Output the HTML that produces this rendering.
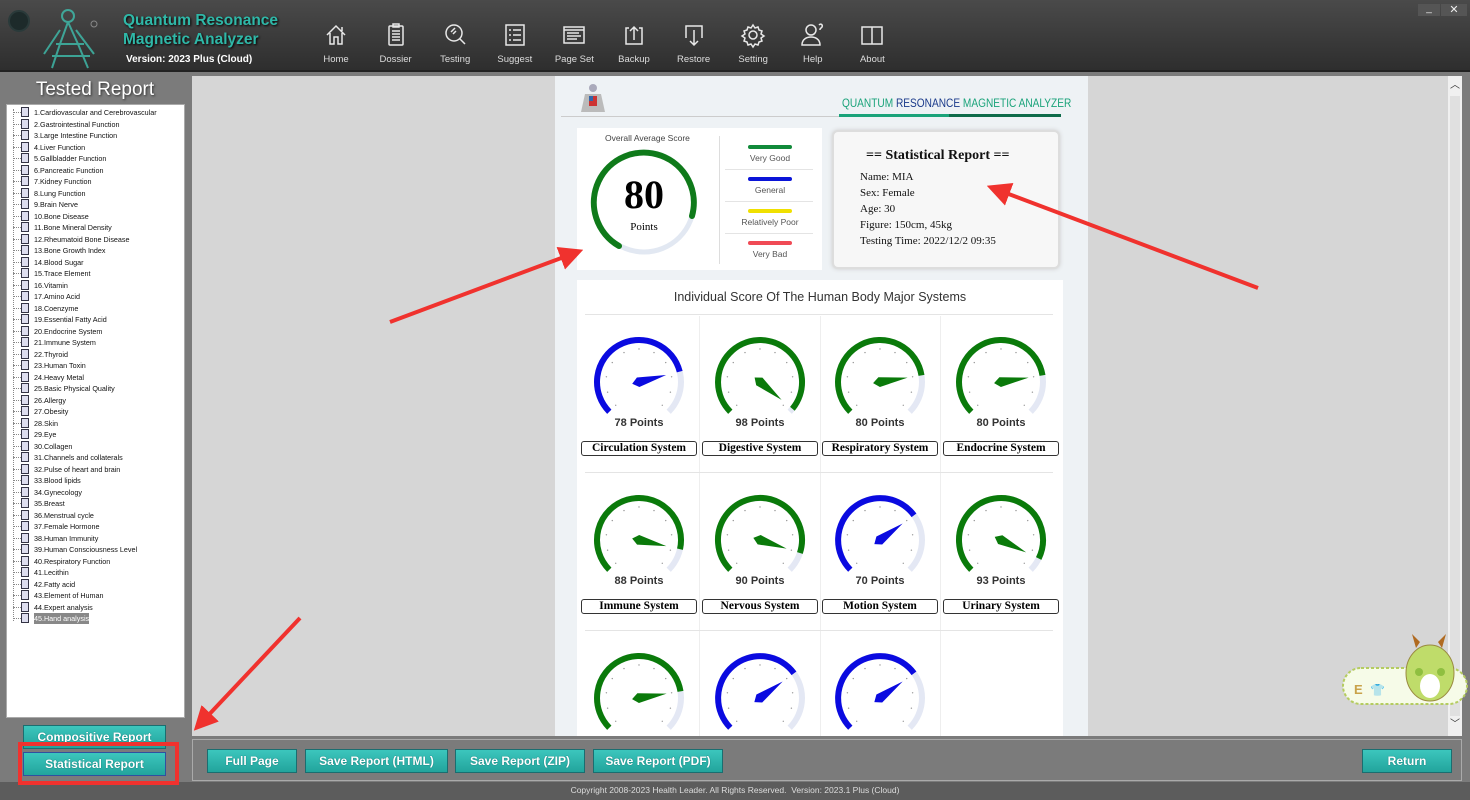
<!DOCTYPE html>
<html><head><meta charset="utf-8"><style>
*{box-sizing:border-box;margin:0;padding:0}
body{width:1470px;height:800px;overflow:hidden;background:#7b7b7b;font-family:"Liberation Sans",sans-serif;position:relative}
.abs{position:absolute}
#hdr{left:0;top:0;width:1470px;height:72px;background:linear-gradient(#4a4a4a,#2e2e2e);border-bottom:2px solid #222}
.nav{position:absolute;top:21px;width:60px;text-align:center;color:#ddd;font-size:9.5px}
.nav svg{display:block;margin:0 auto 5px}
.title{color:#2fb8a8;font-weight:bold;font-size:15.5px;line-height:19px;text-shadow:1px 1px 2px #000}
#left{left:0;top:74px;width:190px;height:708px;background:#7b7b7b}
#list{left:6px;top:104px;width:179px;height:614px;background:#fff;border:1px solid #aaa}
.li{position:absolute;left:14px;font-size:7.2px;color:#111;white-space:nowrap;height:11px;line-height:11px}
.li i{position:absolute;left:0;top:0;width:8px;height:10px;border:1px solid #334;background:#dde}
.li span{position:absolute;left:13px;top:0}
.li:before{content:"";position:absolute;left:-8px;top:5px;width:8px;border-top:1px dotted #888}
#main{left:192px;top:76px;width:1270px;height:660px;background:#d6d6d6}
#page{left:555px;top:76px;width:533px;height:660px;background:#eef2f5;overflow:hidden}
.btn{position:absolute;height:24px;background:linear-gradient(#3cc6bd,#22a49c);border:1px solid #1a6e70;color:#fff;font-weight:bold;font-size:12px;text-align:center;line-height:22px;text-shadow:0 0 1px #055}
.lbl{position:absolute;width:116px;height:15px;border:1px solid #333;border-radius:3px;background:#fff;font-family:"Liberation Serif",serif;font-weight:bold;font-size:11.5px;text-align:center;line-height:13px}
.pts{position:absolute;width:116px;text-align:center;font-weight:bold;font-size:11px;color:#333}
</style></head><body>
<div id="hdr" class="abs">
 <div class="abs" style="left:8px;top:10px;width:22px;height:22px;border-radius:50%;background:#1d2a2a;border:2px solid #2a3a3a"></div>
 <svg class="abs" style="left:30px;top:4px" width="80" height="66"><g stroke="#3fbfae" fill="none" stroke-width="2" opacity=".8"><circle cx="38" cy="12" r="6"/><path d="M38 18 L30 40 L22 64 M38 18 L48 40 L58 64 M30 26 L14 50 M46 26 L64 50 M26 40 H54 M22 52 H60"/></g><circle cx="64" cy="20" r="3" fill="none" stroke="#888"/></svg>
 <div class="abs title" style="left:123px;top:11px">Quantum Resonance<br>Magnetic Analyzer</div>
 <div class="abs" style="left:126px;top:54px;color:#fff;font-size:10px;font-weight:bold">Version: 2023 Plus (Cloud)</div>
 <div id="navs"></div>
 <div class="abs" style="left:1418px;top:4px;width:22px;height:12px;background:#555;color:#eee;font-size:10px;text-align:center;line-height:10px">_</div>
 <div class="abs" style="left:1441px;top:4px;width:26px;height:12px;background:#555;color:#eee;font-size:11px;text-align:center;line-height:12px">✕</div>
</div>
<div id="left" class="abs"><div style="color:#fff;font-size:19px;text-align:center;margin-top:5px;text-shadow:1px 1px 2px #333">Tested Report</div></div>
<div id="list" class="abs"></div>
<div class="btn" style="left:23px;top:725px;width:143px">Compositive Report</div>
<div class="btn" style="left:23px;top:752px;width:143px;border-color:#3050a0">Statistical Report</div>
<div id="main" class="abs"></div>
<div class="abs" style="left:1448px;top:76px;width:14px;height:660px;background:#f0f0f0"><div style="font-size:10px;text-align:center;color:#333">︿</div><div style="position:absolute;bottom:6px;width:14px;font-size:10px;text-align:center;color:#333">﹀</div><div style="position:absolute;top:20px;left:2px;width:10px;height:620px;background:#e0e0e0"></div></div>
<div id="page" class="abs">
 <svg class="abs" style="left:24px;top:6px" width="28" height="32"><circle cx="14" cy="6" r="4" fill="#aab"/><path d="M6 12h16l4 18H2z" fill="#bbb"/><rect x="10" y="14" width="8" height="10" fill="#c33"/><rect x="10" y="14" width="4" height="5" fill="#36a"/></svg>
 <div class="abs" style="left:6px;top:40px;width:500px;border-top:1px solid #ccc"></div>
 <div class="abs" style="left:287px;top:22px;font-size:11.5px;color:#1aa37a;white-space:nowrap;transform:scaleX(.88);transform-origin:left">QUANTUM <span style="color:#1a3a8a">RESONANCE</span> MAGNETIC ANALYZER</div>
 <div class="abs" style="left:284px;top:38px;width:110px;height:3px;background:#1aa37a"></div>
 <div class="abs" style="left:394px;top:38px;width:112px;height:3px;background:#0e6b4a"></div>
 <div class="abs" style="left:22px;top:52px;width:245px;height:142px;background:#fff"></div>
 <div class="abs" style="left:50px;top:57px;font-size:8.5px;color:#444">Overall Average Score</div>
 <svg class="abs" style="left:34px;top:70px" width="110" height="112"><circle cx="55" cy="56" r="50" fill="none" stroke="#e2e8f2" stroke-width="5"/><path d="M30 100 A50 50 0 1 1 103 70" fill="none" stroke="#0f7a1a" stroke-width="6" stroke-linecap="round"/><text x="55" y="62" text-anchor="middle" font-family="Liberation Serif" font-weight="bold" font-size="40">80</text><text x="55" y="84" text-anchor="middle" font-family="Liberation Serif" font-size="11">Points</text></svg>
 <div class="abs" style="left:164px;top:60px;height:128px;border-left:1px solid #ddd"></div>
 <div id="legend"></div>
 <div class="abs" style="left:277px;top:54px;width:228px;height:139px;background:#f7f7f7;border:2px solid #ddd;border-radius:6px;box-shadow:0 0 4px #ccc;font-family:'Liberation Serif',serif;font-size:11px;line-height:16px;color:#111;padding:16px 0 0 26px">
  <div style="font-weight:bold;font-size:14px;margin:0 0 5px 6px">== Statistical Report ==</div>
  Name: MIA<br>Sex: Female<br>Age: 30<br>Figure: 150cm, 45kg<br>Testing Time: 2022/12/2 09:35</div>
 <div class="abs" style="left:22px;top:204px;width:486px;height:456px;background:#fff"></div>
 <div class="abs" style="left:22px;top:214px;width:486px;text-align:center;font-size:12.5px;color:#333">Individual Score Of The Human Body Major Systems</div>
 <div class="abs" style="left:30px;top:238px;width:468px;border-top:1px solid #e4e4e4"></div>
 <div id="gauges"></div>
</div>
<div class="abs" style="left:192px;top:739px;width:1270px;height:42px;border:1px solid #aaa;background:#7b7b7b"></div>
<div class="btn" style="left:207px;top:749px;width:90px">Full Page</div>
<div class="btn" style="left:305px;top:749px;width:143px">Save Report (HTML)</div>
<div class="btn" style="left:455px;top:749px;width:130px">Save Report (ZIP)</div>
<div class="btn" style="left:593px;top:749px;width:130px">Save Report (PDF)</div>
<div class="btn" style="left:1362px;top:749px;width:90px">Return</div>
<div class="abs" style="left:0;top:782px;width:1470px;height:18px;background:#5c5c5c;color:#ddd;font-size:8.5px;text-align:center;line-height:17px">Copyright 2008-2023 Health Leader. All Rights Reserved.&nbsp; Version: 2023.1 Plus (Cloud)</div>
<svg class="abs" style="left:1340px;top:628px" width="130" height="82"><rect x="3" y="40" width="124" height="36" rx="18" fill="#f6fbe8" stroke="#b5cc60" stroke-width="2" stroke-dasharray="3 2"/><text x="14" y="66" font-size="13" font-weight="bold" fill="#c9a24a" font-family="Liberation Sans">E</text><text x="30" y="66" font-size="12" fill="#c9a24a">👕</text><ellipse cx="90" cy="45" rx="24" ry="28" fill="#bfdc6a" stroke="#9a8a40"/><path d="M76 20 l-4-14 8 8zM102 20 l4-14-8 8z" fill="#b06a20"/><ellipse cx="90" cy="58" rx="10" ry="12" fill="#fff"/><circle cx="79" cy="44" r="4" fill="#8fbf40"/><circle cx="101" cy="44" r="4" fill="#8fbf40"/></svg>
<svg class="abs" style="left:0;top:0;pointer-events:none" width="1470" height="800">
<defs><marker id="ah" markerWidth="6" markerHeight="6" refX="3" refY="3" orient="auto"><path d="M0 0L6 3L0 6z" fill="#f0322e"/></marker></defs>
<g stroke="#f0322e" stroke-width="4" marker-end="url(#ah)"><line x1="390" y1="322" x2="572" y2="254"/><line x1="1258" y1="288" x2="998" y2="190"/><line x1="300" y1="618" x2="202" y2="722"/></g>
<rect x="20" y="744" width="157" height="39" fill="none" stroke="#f0322e" stroke-width="4"/></svg>
<script>
var items=["Cardiovascular and Cerebrovascular","Gastrointestinal Function","Large Intestine Function","Liver Function","Gallbladder Function","Pancreatic Function","Kidney Function","Lung Function","Brain Nerve","Bone Disease","Bone Mineral Density","Rheumatoid Bone Disease","Bone Growth Index","Blood Sugar","Trace Element","Vitamin","Amino Acid","Coenzyme","Essential Fatty Acid","Endocrine System","Immune System","Thyroid","Human Toxin","Heavy Metal","Basic Physical Quality","Allergy","Obesity","Skin","Eye","Collagen","Channels and collaterals","Pulse of heart and brain","Blood lipids","Gynecology","Breast","Menstrual cycle","Female Hormone","Human Immunity","Human Consciousness Level","Respiratory Function","Lecithin","Fatty acid","Element of Human","Expert analysis","Hand analysis"];
var h='<div style="position:absolute;left:6px;top:4px;height:512px;border-left:1px dotted #888"></div>';
items.forEach(function(t,i){var last=i==44;h+='<div class="li" style="top:'+(2+i*11.5)+'px"><i></i><span'+(last?' style="background:#888;color:#fff"':'')+'>'+(i+1)+'.'+t+'</span></div>';});
document.getElementById('list').innerHTML=h;
var lg=[["#118a3a","Very Good"],["#0a14d8","General"],["#f0e000","Relatively Poor"],["#f04a55","Very Bad"]],s='';
lg.forEach(function(l,i){var y=69+i*32;s+='<div class="abs" style="left:193px;top:'+y+'px;width:44px;height:4px;border-radius:2px;background:'+l[0]+'"></div><div class="abs" style="left:170px;top:'+(y+8)+'px;width:90px;text-align:center;font-size:8.5px;color:#555">'+l[1]+'</div>'+(i<3?'<div class="abs" style="left:170px;top:'+(y+24)+'px;width:88px;border-top:1px solid #e4e4e4"></div>':'');});
document.getElementById('legend').innerHTML=s;
var navs=[["Home",'<path d="M5 14 L14 5 L23 14 M8 12 V23 H12 V16 H16 V23 H20 V12 M20 6 V10"/>'],["Dossier",'<rect x="7" y="5" width="14" height="19" rx="1"/><rect x="11" y="3" width="6" height="3"/><path d="M10 10h8M10 13h8M10 16h8M10 19h8"/>'],["Testing",'<circle cx="13" cy="12" r="8"/><path d="M19 18 L24 23 M10 11 l4-4 M12 13 l3-3"/>'],["Suggest",'<rect x="5" y="4" width="18" height="20"/><path d="M8 9h2M12 9h8M8 14h2M12 14h8M8 19h2M12 19h8"/>'],["Page Set",'<rect x="4" y="6" width="20" height="16"/><path d="M4 9h20M7 12h12M7 15h14M7 18h10"/>'],["Backup",'<path d="M9 7H6V23H22V7H19M14 19V6M10 10l4-4 4 4"/>'],["Restore",'<path d="M6 17V5H22V17M14 9V24M10 20l4 4 4-4"/>'],["Setting",'<circle cx="14" cy="14" r="4"/><path d="M14 4l2 3 3-1 1 3 3 1-1 3 3 2-3 2 1 3-3 1-1 3-3-1-2 3-2-3-3 1-1-3-3-1 1-3-3-2 3-2-1-3 3-1 1-3 3 1z"/>'],["Help",'<circle cx="12" cy="9" r="5"/><path d="M3 24c0-6 5-8 9-8s9 2 9 8z M20 4c2-2 4 0 3 2l-2 2v1"/>'],["About",'<path d="M4 6H14V23H4zM14 6H24V23H14z"/>']];
var n='';navs.forEach(function(v,i){n+='<div class="nav" style="left:'+(306+i*59.6)+'px"><svg width="28" height="28" fill="none" stroke="#e8e8e8" stroke-width="1.5">'+v[1]+'</svg>'+v[0]+'</div>';});
document.getElementById('navs').innerHTML=n;
function pt(cx,cy,r,a){a=a*Math.PI/180;return [cx+r*Math.sin(a),cy-r*Math.cos(a)];}
function arc(cx,cy,r,a0,a1){var p=pt(cx,cy,r,a0),q=pt(cx,cy,r,a1);return 'M'+p[0].toFixed(1)+' '+p[1].toFixed(1)+' A'+r+' '+r+' 0 '+((a1-a0)>180?1:0)+' 1 '+q[0].toFixed(1)+' '+q[1].toFixed(1);}
var G=[["Circulation System",78,"#0a0ae0"],["Digestive System",98,"#0a7a0a"],["Respiratory System",80,"#0a7a0a"],["Endocrine System",80,"#0a7a0a"],["Immune System",88,"#0a7a0a"],["Nervous System",90,"#0a7a0a"],["Motion System",70,"#0a0ae0"],["Urinary System",93,"#0a7a0a"],["",80,"#0a7a0a"],["",70,"#0a0ae0"],["",70,"#0a0ae0"]];
var xs=[84,205,325,446],g='';
G.forEach(function(d,i){var col=i%4,row=Math.floor(i/4),cx=xs[col],cy=306+row*158;var a=-135+270*d[1]/100;
var sv='<svg class="abs" style="left:'+(cx-55)+'px;top:'+(cy-55)+'px" width="110" height="110"><g transform="translate(55 55)">';
sv+='<path d="'+arc(0,0,42,-135,135)+'" fill="none" stroke="#e4e8f4" stroke-width="6"/>';
sv+='<path d="'+arc(0,0,42,-135,a)+'" fill="none" stroke="'+d[2]+'" stroke-width="6"/>';
for(var k=0;k<=10;k++){var t=pt(0,0,33,-135+27*k);sv+='<circle cx="'+t[0].toFixed(1)+'" cy="'+t[1].toFixed(1)+'" r=".7" fill="#999"/>';}
var tip=pt(0,0,28,a),l=pt(0,0,5,a-100),r2=pt(0,0,5,a+100),b=pt(0,0,7,a+180);
sv+='<path d="M'+tip.join(' ')+' L'+l.join(' ')+' L'+b.join(' ')+' L'+r2.join(' ')+'z" fill="'+d[2]+'"/></g></svg>';
g+=sv;
if(d[0]){g+='<div class="pts" style="left:'+(cx-58)+'px;top:'+(cy+35)+'px">'+d[1]+' Points</div><div class="lbl" style="left:'+(cx-58)+'px;top:'+(cy+59)+'px">'+d[0]+'</div>';}
if(col<3)g+='<div class="abs" style="left:'+(cx+60)+'px;top:'+(cy-66)+'px;height:158px;border-left:1px solid #eee"></div>';
});
g+='<div class="abs" style="left:30px;top:396px;width:468px;border-top:1px solid #e4e4e4"></div><div class="abs" style="left:30px;top:554px;width:468px;border-top:1px solid #e4e4e4"></div>';
document.getElementById('gauges').innerHTML=g;
</script>
</body></html>
